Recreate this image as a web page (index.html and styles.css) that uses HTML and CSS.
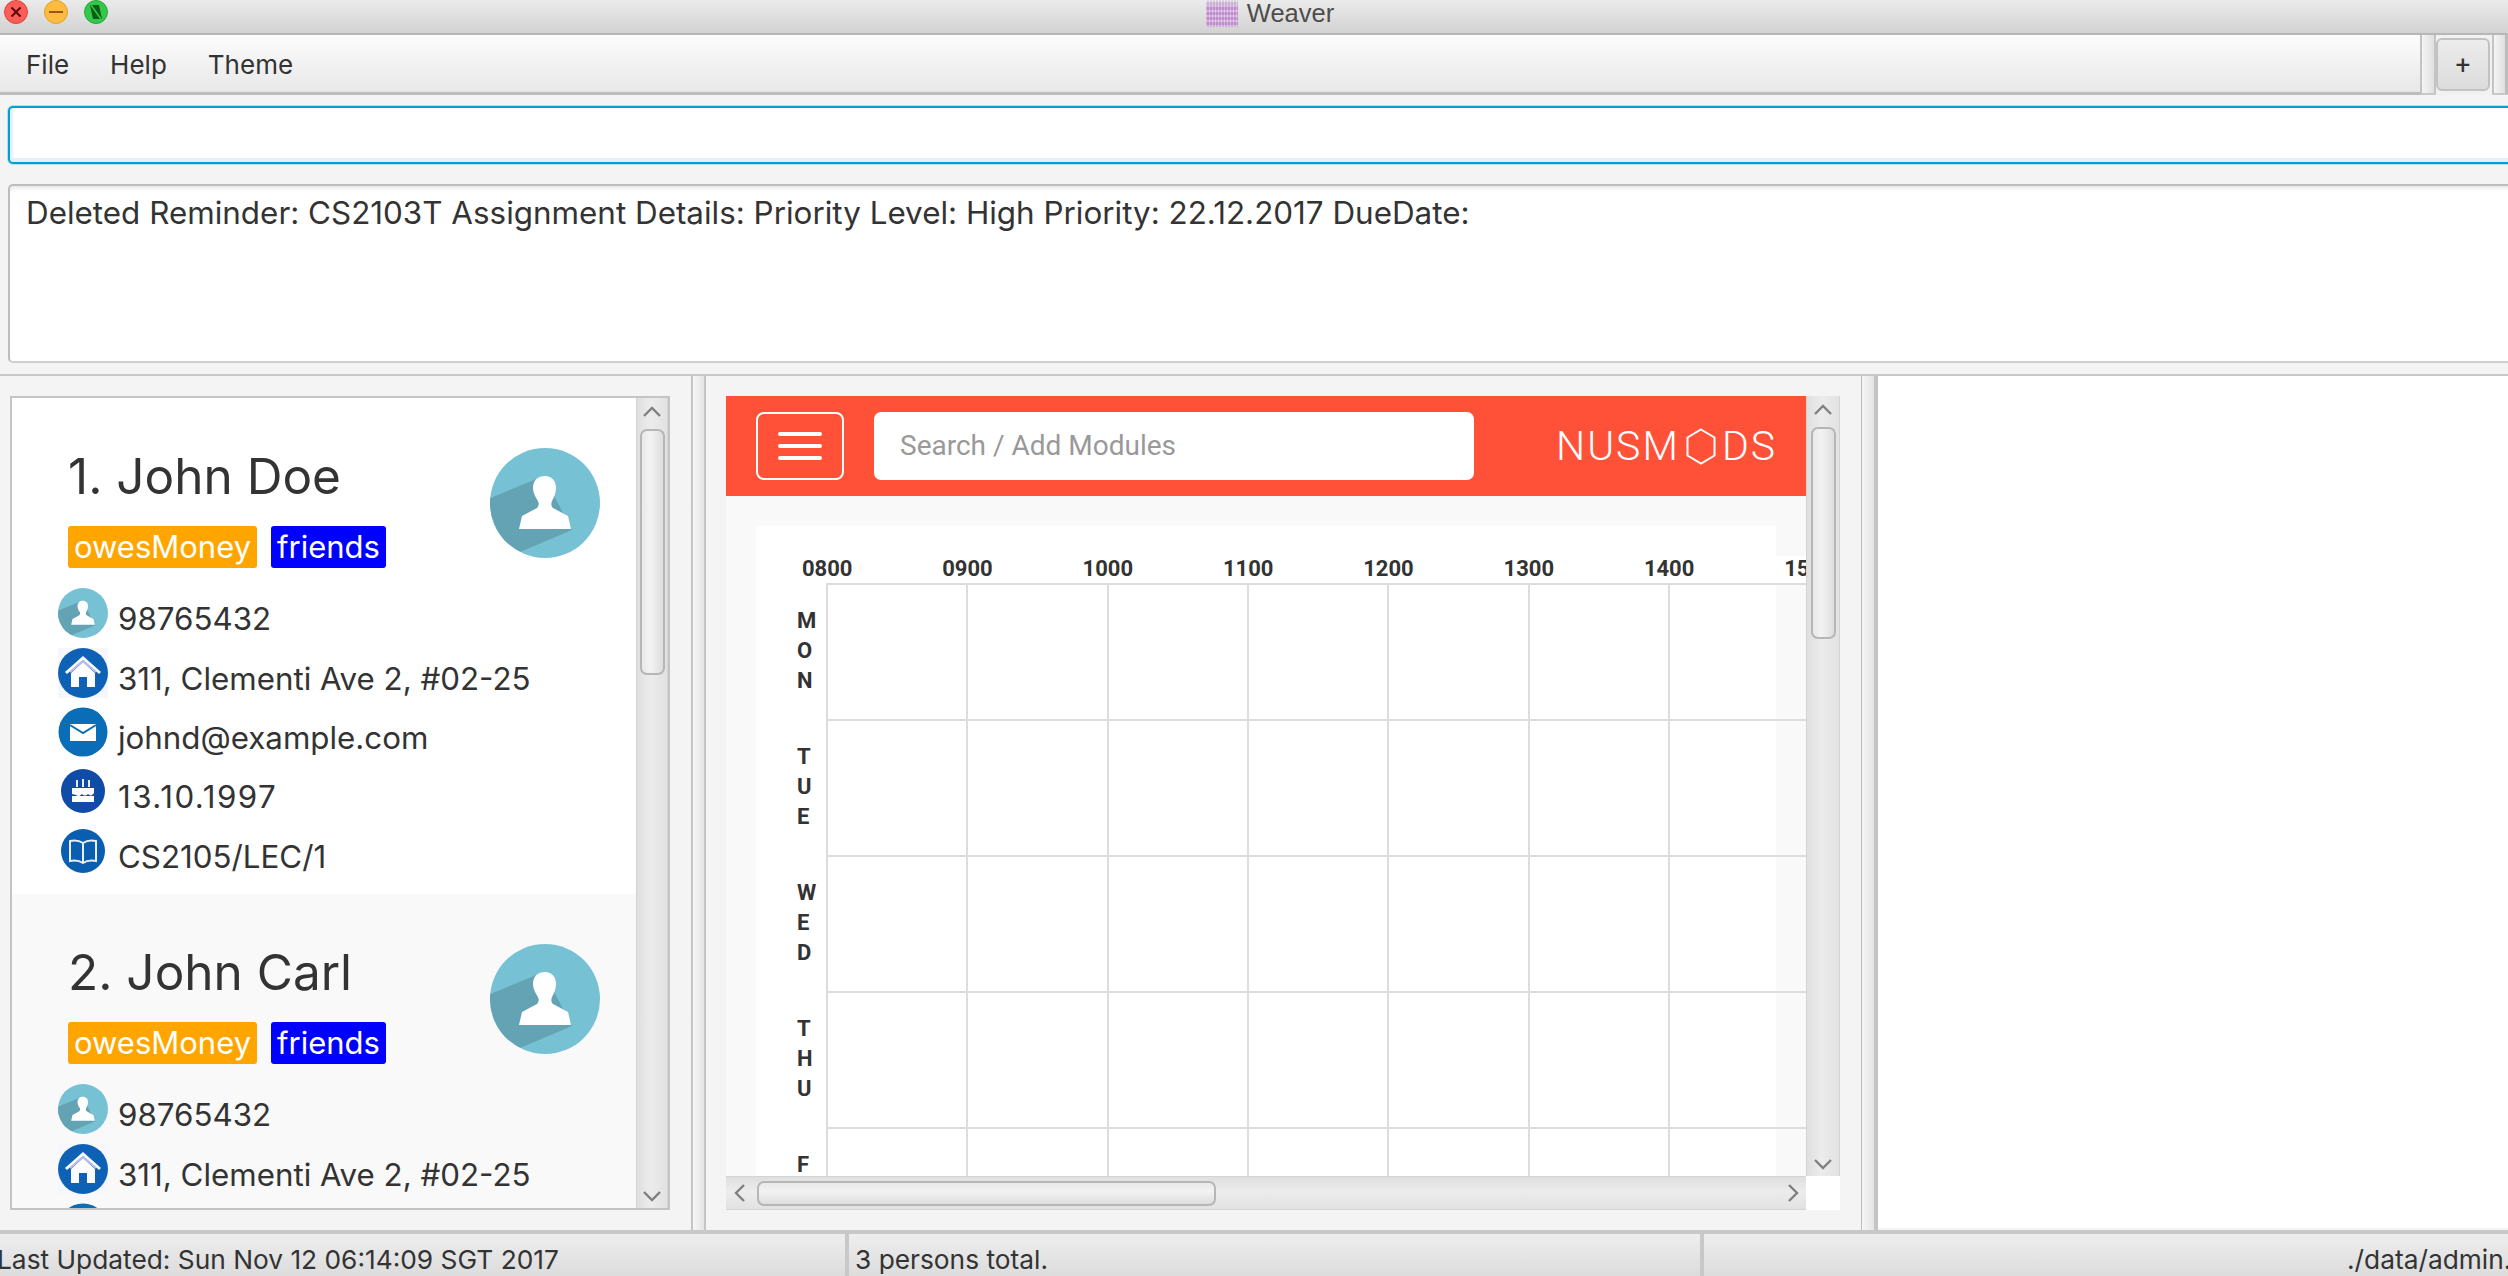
FILE: index.html
```html
<!DOCTYPE html>
<html lang="en">

<head>
    <meta charset="UTF-8">
    <title>Weaver</title>
    <link rel="stylesheet" href="styles.css">
</head>

<body>

    <!-- shared icons -->
    <svg class="defs">
        <defs>
            <clipPath id="discClip"><circle cx="55" cy="55" r="55"/></clipPath>
            <symbol id="iconPerson" viewBox="0 0 110 110">
                <circle cx="55" cy="55" r="55" fill="#77c1d5"/>
                <polygon clip-path="url(#discClip)" points="46,31 -4,52 -4,80 30,104 82,82 60,40" fill="#64a3b4"/>
                <path d="M29 81l3-13 15-8c2-2 2-5 1-7-3-4-5-9-5-13 0-8 5-12 12-12s11 5 11 12c0 5-2 9-4 13-1 3-1 5 1 7l15 8 3 13z" fill="#fff"/>
            </symbol>
            <symbol id="iconHome" viewBox="0 0 50 50">
                <rect width="50" height="50" fill="#f6f7fb"/>
                <circle cx="25" cy="25" r="25" fill="#0e62b5"/>
                <path d="M13 25v14h8V29h8v10h8V25L25 14z" fill="#fff"/>
                <path d="M8 25L25 10l17 15" fill="none" stroke="#fff" stroke-width="3"/>
                <path d="M12 24L25 13l13 11" fill="none" stroke="#b9bfe6" stroke-width="2"/>
            </symbol>
            <symbol id="iconMail" viewBox="0 0 50 50">
                <circle cx="25" cy="25" r="24.5" fill="#0a6db7"/>
                <rect x="12" y="17" width="26" height="17" fill="#fff"/>
                <path d="M12 18l13 8 13-8" fill="none" stroke="#0a6db7" stroke-width="2"/>
            </symbol>
            <symbol id="iconCake" viewBox="0 0 44 44">
                <circle cx="22" cy="22" r="22" fill="#0e4ca8"/>
                <path d="M16 11v7M22 10v8M28 11v7" stroke="#e8ecf6" stroke-width="2"/>
                <path d="M11 19h22v5c-2 3-4 3-6 1-2 2-4 2-6 0-2 2-4 3-6 1l-4-1z" fill="#fff"/>
                <rect x="11" y="27" width="22" height="6" fill="#fff"/>
            </symbol>
            <symbol id="iconBook" viewBox="0 0 44 44">
                <circle cx="22" cy="22" r="22" fill="#0a5eb0"/>
                <path d="M22 14c-3-2-8-3-13-2v20c5-1 10 0 13 2 3-2 8-3 13-2V12c-5-1-10 0-13 2zM22 14v20" fill="none" stroke="#e9eef7" stroke-width="2"/>
            </symbol>
            <symbol id="chevUp" viewBox="0 0 20 12"><path d="M2 10l8-8 8 8" fill="none" stroke="#808080" stroke-width="2.4"/></symbol>
            <symbol id="chevDown" viewBox="0 0 20 12"><path d="M2 2l8 8 8-8" fill="none" stroke="#808080" stroke-width="2.4"/></symbol>
            <symbol id="chevLeft" viewBox="0 0 12 20"><path d="M10 2l-8 8 8 8" fill="none" stroke="#808080" stroke-width="2.4"/></symbol>
            <symbol id="chevRight" viewBox="0 0 12 20"><path d="M2 2l8 8-8 8" fill="none" stroke="#808080" stroke-width="2.4"/></symbol>
        </defs>
    </svg>

    <header class="titlebar">
        <div class="lights">
            <svg class="light" viewBox="0 0 24 24"><circle cx="12" cy="12" r="11.5" fill="#fc5d57" stroke="#e0443e"/><path d="M7.5 7.5l9 9M16.500 7.500l-9 9" stroke="#5a0a08" stroke-width="2"/></svg>
            <svg class="light" viewBox="0 0 24 24"><circle cx="12" cy="12" r="11.5" fill="#fdbc40" stroke="#dfa023"/><path d="M5 12h14" stroke="#985712" stroke-width="2"/></svg>
            <svg class="light" viewBox="0 0 24 24"><circle cx="12" cy="12" r="11.5" fill="#34c84a" stroke="#24a938"/><path d="M6 5h9l3 14H9z" fill="#0a5c16"/><path d="M7 5l10 14" stroke="#34c84a" stroke-width="1.500"/></svg>
        </div>
        <div class="app-title">
            <span class="app-icon"></span>
            <span>Weaver</span>
        </div>
    </header>

    <div class="toolbar">
        <nav class="menu">
            <span>File</span>
            <span>Help</span>
            <span>Theme</span>
        </nav>
        <div class="tool-gap"></div>
        <button class="add-btn" type="button">+</button>
        <div class="tool-gap tool-gap-last"></div>
    </div>

    <div class="command"></div>

    <div class="result">Deleted Reminder: CS2103T Assignment Details: Priority Level: High Priority: 22.12.2017 DueDate:</div>

    <main class="split">

        <section class="left-pane">
            <div class="list-box">
                <div class="cards">

                    <article class="card">
                        <div class="card-head">
                            <div>
                                <div class="name">1. John Doe</div>
                                <div class="tags">
                                    <span class="tag tag-orange">owesMoney</span>
                                    <span class="tag tag-blue">friends</span>
                                </div>
                            </div>
                            <svg class="avatar"><use href="#iconPerson"/></svg>
                        </div>
                        <div class="row"><span class="row-icon"><svg class="ico"><use href="#iconPerson"/></svg></span><span class="row-text">98765432</span></div>
                        <div class="row"><span class="row-icon"><svg class="ico"><use href="#iconHome"/></svg></span><span class="row-text">311, Clementi Ave 2, #02-25</span></div>
                        <div class="row row-short"><span class="row-icon"><svg class="ico"><use href="#iconMail"/></svg></span><span class="row-text">johnd@example.com</span></div>
                        <div class="row"><span class="row-icon"><svg class="ico ico-small"><use href="#iconCake"/></svg></span><span class="row-text row-date">13.10.1997</span></div>
                        <div class="row"><span class="row-icon"><svg class="ico ico-small"><use href="#iconBook"/></svg></span><span class="row-text">CS2105/LEC/1</span></div>
                    </article>

                    <article class="card card-alt">
                        <div class="card-head">
                            <div>
                                <div class="name">2. John Carl</div>
                                <div class="tags">
                                    <span class="tag tag-orange">owesMoney</span>
                                    <span class="tag tag-blue">friends</span>
                                </div>
                            </div>
                            <svg class="avatar"><use href="#iconPerson"/></svg>
                        </div>
                        <div class="row"><span class="row-icon"><svg class="ico"><use href="#iconPerson"/></svg></span><span class="row-text">98765432</span></div>
                        <div class="row"><span class="row-icon"><svg class="ico"><use href="#iconHome"/></svg></span><span class="row-text">311, Clementi Ave 2, #02-25</span></div>
                        <div class="row row-short"><span class="row-icon"><svg class="ico"><use href="#iconMail"/></svg></span><span class="row-text">johnd@example.com</span></div>
                    </article>

                </div>
                <div class="vbar vbar-list">
                    <svg class="chev-v"><use href="#chevUp"/></svg>
                    <div class="thumb-v thumb-list"></div>
                    <svg class="chev-v chev-end"><use href="#chevDown"/></svg>
                </div>
            </div>
        </section>

        <div class="divider divider-left"></div>

        <section class="center-pane">
            <div class="browser">
                <div class="page">
                    <div class="navbar">
                        <div class="burger"><i></i><i></i><i></i></div>
                        <div class="search">Search / Add Modules</div>
                        <div class="logo">NUSM<svg class="logo-hex" viewBox="0 0 30 37"><path d="M15 1.500L28.500 9.500v18L15 35.500 1.500 27.500v-18z" fill="none" stroke="#fff" stroke-width="2"/></svg>DS</div>
                    </div>
                    <div class="timetable">
                        <div class="tt-top"></div>
                        <div class="tt-hours">
                            <span>0800</span><span>0900</span><span>1000</span><span>1100</span><span>1200</span><span>1300</span><span>1400</span><span>1500</span>
                        </div>
                        <div class="tt-grid">
                            <div class="day">M<br>O<br>N</div><div class="cell"></div><div class="cell"></div><div class="cell"></div><div class="cell"></div><div class="cell"></div><div class="cell"></div><div class="cell"></div><div class="cell-end"></div>
                            <div class="day">T<br>U<br>E</div><div class="cell"></div><div class="cell"></div><div class="cell"></div><div class="cell"></div><div class="cell"></div><div class="cell"></div><div class="cell"></div><div class="cell-end"></div>
                            <div class="day">W<br>E<br>D</div><div class="cell"></div><div class="cell"></div><div class="cell"></div><div class="cell"></div><div class="cell"></div><div class="cell"></div><div class="cell"></div><div class="cell-end"></div>
                            <div class="day">T<br>H<br>U</div><div class="cell"></div><div class="cell"></div><div class="cell"></div><div class="cell"></div><div class="cell"></div><div class="cell"></div><div class="cell"></div><div class="cell-end"></div>
                            <div class="day">F<br>R<br>I</div><div class="cell"></div><div class="cell"></div><div class="cell"></div><div class="cell"></div><div class="cell"></div><div class="cell"></div><div class="cell"></div><div class="cell-end"></div>
                        </div>
                    </div>
                </div>
                <div class="vbar">
                    <svg class="chev-v"><use href="#chevUp"/></svg>
                    <div class="thumb-v thumb-page"></div>
                    <svg class="chev-v chev-end"><use href="#chevDown"/></svg>
                </div>
                <div class="hbar">
                    <svg class="chev-h"><use href="#chevLeft"/></svg>
                    <div class="thumb-h"></div>
                    <svg class="chev-h chev-end-h"><use href="#chevRight"/></svg>
                </div>
                <div class="corner"></div>
            </div>
        </section>

        <div class="divider divider-right"></div>

        <section class="right-pane"></section>

    </main>

    <footer class="status">
        <div class="status-cell status-first">Last Updated: Sun Nov 12 06:14:09 SGT 2017</div>
        <div class="status-cell status-second">3 persons total.</div>
        <div class="status-cell status-third">./data/admin.xml</div>
    </footer>

</body>

</html>
```

FILE: styles.css
```css
* {
    box-sizing: border-box;
}

html,
body {
    margin: 0;
    height: 1276px;
    overflow: hidden;
}

body {
    font-family: Inter, "Liberation Sans", sans-serif;
    color: #333;
    background-color: #f4f4f4;
    display: flex;
    flex-direction: column;
}

.defs {
    display: block;
    width: 0;
    height: 0;
}

/* window title */
.titlebar {
    height: 35px;
    flex: none;
    display: flex;
    justify-content: center;
    padding-left: 32px;
    position: relative;
    background: linear-gradient(#ebebeb, #d2d2d2);
    border-bottom: 2px solid #b7b7b7;
}

.lights {
    position: absolute;
    left: 4px;
    top: 0;
    display: flex;
    gap: 16px;
}

.light {
    width: 24px;
    height: 24px;
}

.app-title {
    display: flex;
    gap: 9px;
    font-family: "Liberation Sans", sans-serif;
    font-size: 25.500px;
    line-height: 26px;
    color: #4d4d4d;
}

.app-icon {
    width: 32px;
    height: 27px;
    background:
        repeating-linear-gradient(90deg, rgba(255, 255, 255, 0.2) 0 1px, rgba(120, 90, 170, 0.15) 1px 3px),
        repeating-linear-gradient(0deg, rgba(255, 255, 255, 0.25) 0 2px, rgba(140, 90, 170, 0.2) 2px 5px),
        linear-gradient(#e6dce6 0 5px, #d7a8dc 5px);
}

/* menu row */
.toolbar {
    height: 60px;
    flex: none;
    display: flex;
    background: #f1f1f1;
}

.menu {
    width: 2420px;
    display: flex;
    gap: 41px;
    padding-left: 26px;
    padding-top: 1px;
    align-items: center;
    font-size: 26px;
    background: linear-gradient(#fcfcfc, #e8e8e8);
    border-bottom: 3px solid #bcbcbc;
}

.tool-gap {
    width: 16px;
    border-left: 2px solid #c4c4c4;
    border-right: 2px solid #c4c4c4;
    border-bottom: 2px solid #c8c8c8;
    background: linear-gradient(90deg, #f4f4f4, #e0e0e0);
}

.tool-gap-last {
    width: 16px;
    border-right: 3px solid #bdbdbd;
    margin-left: 2px;
}

.add-btn {
    width: 54px;
    height: 53px;
    margin-top: 3px;
    padding: 0;
    font-family: Roboto, sans-serif;
    font-size: 26px;
    color: #333;
    border: 2px solid #c2c2c2;
    border-radius: 6px;
    background: linear-gradient(#ececec, #dcdcdc);
}

/* command box and result box */
.command {
    flex: none;
    height: 58px;
    width: 2600px;
    margin: 11px 0 0 8px;
    background: #fff;
    border: 2px solid #039ed3;
    border-radius: 5px;
    box-shadow: inset 0 -4px 0 #e2f1f8, inset 3px 0 2px #e2f1f8, 0 0 0 1px #b8dff0;
}

.result {
    flex: none;
    height: 179px;
    width: 2600px;
    margin: 20px 0 11px 8px;
    padding: 7px 16px;
    font-size: 31.400px;
    line-height: 40px;
    background: #fff;
    border: 2px solid #bdbdbd;
    border-bottom-color: #cfcfcf;
    border-radius: 5px;
    box-shadow: inset 0 6px 6px -5px #ddd;
}

/* three panes */
.split {
    flex: none;
    height: 856px;
    display: flex;
    border-top: 2px solid #c8c8c8;
}

.left-pane {
    width: 691px;
    flex: none;
    padding: 20px 21px 20px 10px;
}

.list-box {
    height: 814px;
    display: flex;
    background: #fff;
    border: 2px solid #c4c4c4;
}

.cards {
    width: 624px;
    flex: none;
    overflow: hidden;
}

.card {
    height: 496px;
    padding-left: 46px;
    padding-right: 36px;
    background: #fff;
}

.card-alt {
    background: #f9f9f9;
}

.card-head {
    height: 185px;
    padding: 50px 0 0 10px;
    display: flex;
    justify-content: space-between;
}

.name {
    font-size: 49.500px;
    line-height: 56px;
}

.tags {
    display: flex;
    gap: 14px;
    margin-top: 22px;
}

.tag {
    height: 42px;
    padding: 0 6px;
    font-size: 31px;
    line-height: 41px;
    color: #fff;
    border-radius: 3px;
}

.tag-orange {
    background-color: #ffa500;
}

.tag-blue {
    background-color: #0000ff;
}

.avatar {
    width: 110px;
    height: 110px;
}

.row {
    height: 60px;
    display: flex;
    align-items: center;
    gap: 10px;
}

.row-short {
    height: 58px;
}

.row-icon {
    width: 50px;
    display: flex;
    justify-content: center;
}

.ico {
    width: 50px;
    height: 50px;
}

.ico-small {
    width: 44px;
    height: 44px;
}

.row-text {
    padding-top: 12px;
    font-size: 31.300px;
    line-height: 40px;
}

.row-date {
    letter-spacing: 1.500px;
}

/* scrollbars */
.vbar {
    width: 34px;
    height: 100%;
    display: flex;
    flex-direction: column;
    align-items: center;
    padding-top: 8px;
    background: linear-gradient(90deg, #dfdfdf, #ececec 45%, #e2e2e2);
    border-left: 1px solid #d4d4d4;
    border-right: 1px solid #d4d4d4;
}

.vbar-list {
    width: 32px;
}

.chev-v {
    width: 20px;
    height: 12px;
    flex: none;
}

.chev-end {
    margin-top: auto;
    margin-bottom: 6px;
}

.thumb-v {
    width: 25px;
    margin-top: 11px;
    border: 2px solid #b6b6b6;
    border-radius: 7px;
    background: linear-gradient(90deg, #e9e9e9, #f2f2f2 40%, #dedede);
}

.thumb-list {
    height: 246px;
}

.thumb-page {
    height: 212px;
}

.hbar {
    height: 34px;
    display: flex;
    align-items: center;
    padding-left: 8px;
    background: linear-gradient(#dfdfdf, #ececec 45%, #e2e2e2);
    border-top: 1px solid #d4d4d4;
    border-bottom: 1px solid #d4d4d4;
}

.chev-h {
    width: 12px;
    height: 20px;
    flex: none;
}

.chev-end-h {
    margin-left: auto;
    margin-right: 7px;
}

.thumb-h {
    width: 459px;
    height: 25px;
    margin-left: 11px;
    border: 2px solid #b6b6b6;
    border-radius: 7px;
    background: linear-gradient(#e9e9e9, #f2f2f2 40%, #dedede);
}

.corner {
    background: #fff;
}

.divider {
    height: 100%;
    flex: none;
    background: linear-gradient(90deg, #f6f6f6, #e4e4e4);
}

.divider-left {
    width: 15px;
    border-left: 2px solid #c4c4c4;
    border-right: 2px solid #c4c4c4;
}

.divider-right {
    width: 17px;
    border-left: 1px solid #bcbcbc;
    border-right: 4px solid #c4c4c4;
}

/* embedded browser */
.center-pane {
    width: 1155px;
    flex: none;
    padding: 20px 21px 20px 20px;
}

.browser {
    display: grid;
    grid-template-columns: 1080px 34px;
    grid-template-rows: 780px 34px;
    height: 814px;
    font-family: Roboto, sans-serif;
}

.page {
    overflow: hidden;
    background: #f9f9f9;
}

.navbar {
    height: 100px;
    display: flex;
    align-items: center;
    padding-left: 30px;
    background: #ff5138;
}

.burger {
    width: 88px;
    height: 68px;
    display: flex;
    flex-direction: column;
    justify-content: center;
    align-items: center;
    gap: 8px;
    border: 2px solid #fff;
    border-radius: 8px;
}

.burger i {
    width: 44px;
    height: 4px;
    border-radius: 2px;
    background: #fff;
}

.search {
    width: 600px;
    height: 68px;
    margin-left: 30px;
    padding-left: 26px;
    font-size: 28px;
    line-height: 68px;
    color: #999;
    background: #fff;
    border-radius: 7px;
}

.logo {
    margin-left: 82px;
    display: flex;
    align-items: center;
    font-size: 41px;
    font-weight: 300;
    letter-spacing: 2px;
    color: #fff;
}

.logo-hex {
    width: 30px;
    height: 37px;
    margin: 0 6px 0 6px;
}

.timetable {
    margin: 30px 0 0 30px;
    width: 1050px;
}

.tt-top {
    width: 1020px;
    height: 30px;
    background: #fff;
}

.tt-hours {
    height: 27px;
    display: flex;
    padding-left: 1px;
    overflow: hidden;
    background: #fff;
    font-size: 22px;
    font-weight: 700;
    line-height: 26px;
}

.tt-hours span {
    width: 140.330px;
    flex: none;
    text-align: center;
}

.tt-grid {
    display: grid;
    grid-template-columns: 70px repeat(6, 140.330px) 108px 30px;
    grid-auto-rows: 136px;
    padding-top: 2px;
    background: linear-gradient(90deg, #fff 70px, #ddd 70px) 0 0 / 100% 2px no-repeat;
}

.day {
    padding: 21px 0 0 41px;
    font-size: 22px;
    font-weight: 700;
    line-height: 30px;
    background: #fff;
}

.cell {
    background: #fff;
    border-left: 2px solid #ddd;
    border-bottom: 2px solid #ddd;
}

.cell-end {
    background: #f9f9f9;
    border-bottom: 2px solid #ddd;
}

.right-pane {
    flex: 1;
    margin-bottom: 2px;
    background: #fff;
}

/* status bar */
.status {
    height: 46px;
    flex: none;
    display: flex;
    font-size: 26.300px;
    line-height: 52px;
    border-top: 4px solid #c8c8c8;
    background: linear-gradient(#eeeeee, #dcdcdc);
    overflow: hidden;
    white-space: nowrap;
}

.status-cell {
    height: 42px;
    flex: none;
    overflow: hidden;
}

.status-first {
    width: 849px;
    text-indent: -3px;
    border-right: 4px solid #c8c8c8;
}

.status-second {
    width: 855px;
    padding-left: 6px;
    border-right: 4px solid #c8c8c8;
}

.status-third {
    padding-left: 643px;
}
```
